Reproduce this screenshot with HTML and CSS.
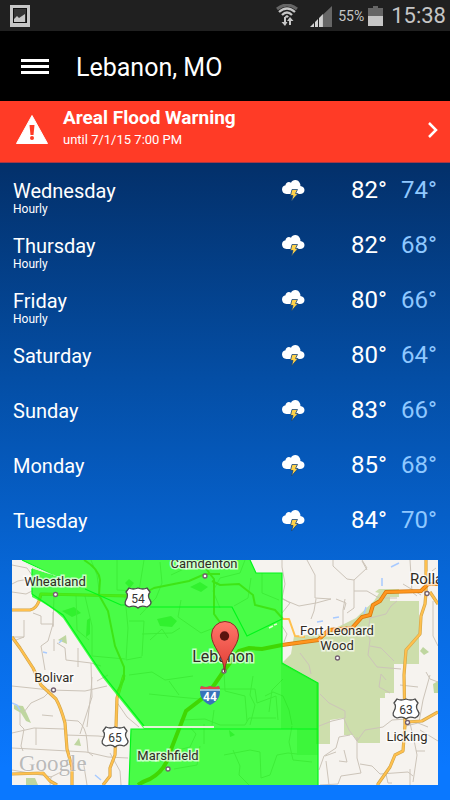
FILE: index.html
```html
<!DOCTYPE html>
<html lang="en">
<head>
<meta charset="utf-8">
<meta name="viewport" content="width=device-width, initial-scale=1">
<title>Lebanon, MO</title>
<link rel="stylesheet" href="styles.css">
</head>
<body>
<div class="status">
  <svg class="status-picture" width="20" height="22" viewBox="0 0 20 22" aria-hidden="true">
    <rect width="20" height="22" fill="#c6c6c6"/><rect x="3" y="3" width="14" height="15" fill="#111"/><rect x="4" y="4" width="12" height="13" fill="#353535"/>
    <path d="M4 17v-3l3-3 2 2 6-4v8z" fill="#c6c6c6"/>
  </svg>
  <svg width="22" height="23" viewBox="0 0 22 23" aria-hidden="true" fill="none">
    <path d="M1 5Q11-3 21 5" stroke="#666" stroke-width="3"/>
    <path d="M3 8Q11 1 19 8M6 11Q11 6 16 11" stroke="#c6c6c6" stroke-width="2.3"/>
    <path d="M8.700 12.500 11 11l2 1.500-2 1.500z" fill="#c6c6c6"/>
    <path d="M9 13v6M14 21v-6" stroke="#c6c6c6" stroke-width="2"/>
    <path d="M5.500 18h6L9 22zM11 17h6.500L14 13z" fill="#c6c6c6"/>
  </svg>
  <svg class="signal" width="22" height="21" viewBox="0 0 22 21" aria-hidden="true">
    <path d="M12 9.500 22 0v21H12z" fill="#666"/>
    <path d="M0 21l4-4v4zM5 16l3-3v8H5zM9 12l3-3v12H9z" fill="#d2d2d2"/>
    <path d="M12 21V9l1-1v13z" fill="#c6c6c6"/>
  </svg>
  <span class="percent">55%</span>
  <svg class="battery" width="15" height="20" viewBox="0 0 15 20" aria-hidden="true">
    <path d="M5 0h5v2h5v8H0V2h5z" fill="#666"/><path d="M0 10h15v10H0z" fill="#c6c6c6"/>
  </svg>
  <time class="clock">15:38</time>
</div>

<header class="bar">
  <button class="menu" type="button" aria-label="Menu"><span></span><span></span><span></span></button>
  <h1>Lebanon, MO</h1>
</header>

<a class="alert" href="#warning">
  <svg width="32" height="29" viewBox="0 0 32 29" aria-hidden="true">
    <path d="M16 .5 31.500 28.500H.5z" fill="#fff" stroke="#fff" stroke-linejoin="round"/>
    <path d="M13.500 10h5l-1 10h-3z" fill="#ff3b26"/><circle cx="16" cy="23" r="2" fill="#ff3b26"/>
  </svg>
  <span class="alert-text"><strong>Areal Flood Warning</strong><span>until 7/1/15 7:00 PM</span></span>
  <svg class="chevron" width="10" height="16" viewBox="0 0 10 16" aria-hidden="true"><path d="M1 1l7 7-7 7" fill="none" stroke="#fff" stroke-width="2.500"/></svg>
</a>

<svg class="symbols" aria-hidden="true">
  <symbol id="storm" viewBox="0 0 24 22">
    <path d="M5.500 15A4.800 4.800 0 0 1 1 10.500C1 8 2.500 6.500 4.500 6.200 4.500 3.500 8 2 10 3.800 11.500 0 17.500 0 19 4.500c.5 1 .5 2 .3 2.500 2.500.2 4.200 2 4.200 4 0 2.500-2 4-4.500 4z" fill="#fff"/>
    <path d="M11 10.500h5.500l-2 4H17L10.500 22l1.500-5.500H9.500z" fill="#ffd24a" stroke="#17447b" stroke-width=".8"/>
  </symbol>
</svg>

<main>
  <ul class="days">
    <li><a href="#wednesday"><span class="day">Wednesday<small>Hourly</small></span><svg class="icon"><use href="#storm"/></svg><span class="high">82°</span><span class="low">74°</span></a></li>
    <li><a href="#thursday"><span class="day">Thursday<small>Hourly</small></span><svg class="icon"><use href="#storm"/></svg><span class="high">82°</span><span class="low">68°</span></a></li>
    <li><a href="#friday"><span class="day">Friday<small>Hourly</small></span><svg class="icon"><use href="#storm"/></svg><span class="high">80°</span><span class="low">66°</span></a></li>
    <li><a href="#saturday"><span class="day">Saturday</span><svg class="icon"><use href="#storm"/></svg><span class="high">80°</span><span class="low">64°</span></a></li>
    <li><a href="#sunday"><span class="day">Sunday</span><svg class="icon"><use href="#storm"/></svg><span class="high">83°</span><span class="low">66°</span></a></li>
    <li><a href="#monday"><span class="day">Monday</span><svg class="icon"><use href="#storm"/></svg><span class="high">85°</span><span class="low">68°</span></a></li>
    <li><a href="#tuesday"><span class="day">Tuesday</span><svg class="icon"><use href="#storm"/></svg><span class="high">84°</span><span class="low">70°</span></a></li>
  </ul>

  <svg class="map" viewBox="12 560 426 225" role="img" aria-label="Map of the warning area around Lebanon">
    <rect x="12" y="560" width="426" height="225" fill="#f6f3ef"/>
    <!-- forest and parks -->
    <path d="M375 592l4-3h20v8h-9v4h29v63h-25v29h-9v5h-5v45h-22l-5-8h-9v-17l-14 2v24h-14v-61l-35-19 10-10 3-18 26-2 22-9 14-7 18-17 5-8z" fill="#cddeac"/>
    <path d="M58 640l8-5 1 9zM74 745l5-7 2 8zM26 778h9l3 7H26zM14 705l9 1 4 8 4 9-5-2-5-8-7-4zM420 651l3-4 6 5-5 3zM433 684l5-3v12h-4z" fill="#bfd6a0"/>
    <path d="M62 611l12-4 7 6-9 4zM87 620l3-2v16l-4 3zM157 619l14-3 6 5-5 6-12-1zM190 587l10-5 8 5-7 5zM229 730l6 5-5 2zM125 583l4-4 5 4-4 5z" fill="#a6cf9a"/>
    <path d="M391 567l8-4M382 578v8M317 622l6-1M333 618l6-1M366 607l-2 7M12 703l5 2 3 5M95 775l6 5M43 652l4 1M59 643l3-3" fill="none" stroke="#a8caff" stroke-width="1.500"/>
    <!-- minor roads -->
    <g fill="none" stroke="#ccc4b9" stroke-linejoin="round">
      <path d="M12 565l15 3 7 10M12 584q12-8 22 0M12 592l14 2 6-3M24 620v17H12M24 637l-8 3M33 613l8 3v8h12l-5 17M53 612v15M48 641l-7 5 4 24M57 643l8 5 1 12 25 3 10 3M78 648v19M54 651v-12M91 663l1 34-12 37M12 686l38 4 35 1 22-5M92 677l-1 15-4 35M64 720l14 1q8 6 9 20l1 11 5 4M12 733l22-5 30 1M65 735l33 1 10 1M36 728v17M20 712v13l4 4-3 17 2 5M12 748l38 2 36 2 22 5 20 1M42 715l11 1M24 712l7-9 13-6 7-7M116 701l11 16 12 10M97 681l11-6M83 760l4 25M50 785l1-8 10-5M110 753l10 18 1 14M60 767l14-4M12 770l40 7"/>
      <path d="M91 560l6 15 3 22M117 560v30l22 1 5-31M54 595l-1 31M76 594l1 36 12 10M85 596l7 30v30l33 3M125 597l3 31-2 32 16-3M129 621h15l-2 35M142 634l30-1 8-5M160 562l2 21-6 15-16 17M181 600l-3 17 23 16 18-7M186 568l-15 7M245 560l-5 13-20 5-7 13 7 17M251 578l-3 20-14 8M262 573v20l17 7M150 640l12-11 6 9M129 675l23-3 13 8 28-4M149 694l29 3 22 2M224 671l1 20 20 5 2 25M215 689h40l2 14 19-7 2 24M253 676l-3 19 5 10-5 20M283 679l-11 11-3 22M214 710l-2 15M180 720l25-1 15 6h25l4-7h27M169 681l10 14M189 726l7 8-6 13-20 5M174 769l23-4 3-19M204 724v20M233 750l7 16-1 9 10 10M224 755l26-5 10 2 1 26 9-3 7-20 11-2 9 1M265 696l8-4 10 4 6 14 3 15M292 726l-3 16 4 18 19 2"/>
      <path d="M282 560v7l3 17-3 14 8 5-8 10M307 560l8 15v23l16 1-15 4-17 3-17-7M316 599l-2 12-3 8M282 626l5 8-3 8M333 560v6l14 13 7 1 13-12-5-8M354 580v28l-7 5M345 599l-2 11v15M336 599l10 4-2 7M354 591h13l12 7h18M362 561l5 9M410 560l2 32 5 4M397 601l-6 5-5 8-16 4-2 14 2 8-2 15 9 12 24 2M300 653l9 12 2 9M370 646l11 2 13 13M432 571l4-3M421 595l-18-11M433 601v35l5 10M400 685l18 2M438 682l-8-3-4-7M386 680l-5-6-2 13 11 6M320 694l9 9 16 8v7l-13 3-13 5M344 719l5 11 8 11 8-11 18-3 9-7 15-1M350 735l-11 2-3 11-12 8-5 14M336 752l-11 4M344 750l3 12-8-1M357 737v21l4 15-20 3-3 8-18 1M329 785l-3-24M360 764l12 2 8 8 28-2 5 4M410 723l5 22 2 10-4 27M420 730l18 11M428 727l-10-4-12 3M425 751h-9M430 675l-7 25-4 22M386 774l2 9h4M410 769v16"/>
    </g>
    <!-- highways -->
    <g fill="none" stroke="#cfa448" stroke-width="3.200" stroke-linejoin="round">
      <path id="hw1" d="M12 610h18q6-1 9-9l2-7 88 2M12 637l8 11 13 20 8 17 15 14q5 9 9 24l2 26 5 18v25M12 774l31-1 7 8 7 4M124 675l-7 23-2 57-5 13v8l-7 9M426 560v32l-1 12-4 12-1 18-14 16-2 25 1 50-2 26-8 4-5 12-12 17v9M430 592l8 12M407 722l15-1 16-9"/>
    </g>
    <use class="road-fill" href="#hw1"/>
    <g fill="none" stroke="#ffc04e" stroke-width="2" stroke-linejoin="round">
      <path d="M12 610h18q6-1 9-9l2-7 88 2M12 637l8 11 13 20 8 17 15 14q5 9 9 24l2 26 5 18v25M12 774l31-1 7 8 7 4M124 675l-7 23-2 57-5 13v8l-7 9M282 619h7l6 17 10 1M426 560v32l-1 12-4 12-1 18-14 16-2 25 1 50-2 26-8 4-5 12-12 17v9M430 592l8 12M407 722l15-1 16-9"/>
    </g>
    <path d="M84 560q15 9 16 20l-1 15 9 16 7 35 9 21v12l-7 13M129 596q17-3 25-8l35-7 16-7h15M200 560l10 14 4 5v35l10 14M212 581l8 4 19-1 14 11 2 10 20 5 8 9" fill="none" stroke="#cfa948" stroke-width="2"/>
    <path d="M138 785q6-4 12-6 16-9 20-27l16-41 22-17 15-22 16-21 10-3 13 1 20-4 36-5 11-10 23-2 10-11 8-2 3-10 7-4 6-9 35-1 7-7h10" fill="none" stroke="#d7780b" stroke-width="4"/>
    <path d="M282 645l36-5 11-10 23-2 10-11 8-2 3-10 7-4 6-9 35-1 7-7h10" fill="none" stroke="#ff961f" stroke-width="2.500"/>
    <!-- warning area -->
    <path d="M22 560h228l6 13h26v90l36 20v102H129l2-55 1-1h12l-41-51-40-60q-12-12-31-21v-29l24 8z" fill="#00ff00" fill-opacity=".7"/>
    <path d="M281 663l37 20v72h-21v-26h-16z" fill="#00d800" fill-opacity=".16"/>
    <path d="M250 560l6 13h26v90l36 20v102M318 729H131l-2 56M144 726l-41-51-40-60-31-21v-25M22 560l31 15M85 589l36 16h13M150 607h82l15 29 35-17" fill="none" stroke="#00f61b" stroke-width="1.200"/>
    <path d="M24 562l32 14-22-7zM143 726h71v2h-70z" fill="#e1f5d6"/>
    <path d="M269 628l4-2M274 625l3-1" stroke="#dfffcf" stroke-width="1.500"/>
    <!-- places -->
    <g fill="#fff" stroke="#735f70" stroke-width="1.300"><circle cx="55.500" cy="594.500" r="2"/><circle cx="205" cy="576" r="2"/><circle cx="224" cy="671" r="2"/><circle cx="337.500" cy="658" r="2"/><circle cx="427" cy="593.500" r="2"/><circle cx="53.500" cy="690" r="2"/><circle cx="168" cy="769" r="2"/><circle cx="407.500" cy="722.500" r="2"/></g>
    <g class="labels">
      <text x="55" y="586">Wheatland</text>
      <text x="204" y="568">Camdenton</text>
      <text class="city" x="223" y="662">Lebanon</text>
      <text class="rolla" x="410" y="584">Rolla</text>
      <text x="337" y="635">Fort Leonard</text>
      <text x="337" y="650">Wood</text>
      <text x="54" y="682">Bolivar</text>
      <text x="168" y="760">Marshfield</text>
      <text x="407" y="741">Licking</text>
    </g>
    <!-- route shields -->
    <g fill="#fff" stroke="#4b4b4b" stroke-width="1.300" stroke-linejoin="round">
      <path id="us" d="M129 588q4 2 9 0 5 2 9 0l3 4q-3 4 0 8t-3 7q-6-2-9 1-3-3-9-1-6-2-3-7t0-8z"/>
      <use href="#us" x="-23" y="139"/><use href="#us" x="268" y="111"/>
    </g>
    <path d="M201 686q5 2 9 0 4 2 9 0 4 13-9 19-13-6-9-19z" fill="#3973ba"/>
    <path d="M201 686q5 2 9 0 4 2 9 0l1 3h-20z" fill="#df4949"/><path d="M200 690h20" stroke="#fff"/>
    <g class="routes"><text x="138" y="603">54</text><text x="115" y="742">65</text><text x="406" y="714">63</text><text class="interstate" x="210" y="701">44</text></g>
    <!-- pin -->
    <defs><linearGradient id="red" x2="0" y2="1"><stop stop-color="#ff776a"/><stop offset="1" stop-color="#e13c34"/></linearGradient></defs>
    <path d="M224.500 672c-1-18-13-25-13-37a13.500 13.500 0 0 1 27 0c0 12-13 19-14 37z" fill="url(#red)" stroke="#8a2925"/>
    <circle cx="224.500" cy="636" r="4.700" fill="#5b140f"/>
    <text class="google" x="19" y="771">Google</text>
  </svg>
</main>
</body>
</html>
```
FILE: styles.css
```css
* { box-sizing: border-box; }

body {
  margin: 0;
  min-height: 100vh;
  display: flex;
  flex-direction: column;
  background: #0a78ff;
  color: #fff;
  font-family: Roboto, "Liberation Sans", sans-serif;
}

a { color: inherit; text-decoration: none; }

.status {
  display: flex;
  align-items: center;
  height: 31px;
  padding: 0 4px 0 10px;
  background: #202020;
  color: #c6c6c6;
}
.status-picture { margin-right: auto; }
.signal { margin: 2px 6px 0 12px; }
.percent { font-size: 14px; }
.battery { margin: 0 8px 0 4px; }
.clock { font-size: 22px; }

.bar {
  display: flex;
  align-items: center;
  gap: 27px;
  height: 70px;
  padding: 2px 21px 0;
  background: #000;
}
.bar h1 { margin: 0; font-size: 25px; font-weight: 400; }
.menu {
  display: flex;
  flex-direction: column;
  gap: 3px;
  width: 28px;
  padding: 0 0 2px;
  border: 0;
  background: none;
}
.menu span { height: 3px; background: #fff; }

.alert {
  display: flex;
  align-items: center;
  gap: 15px;
  height: 62px;
  padding: 0 12px 4px 16px;
  background: #ff3b26;
  border-bottom: 1px solid #a43847;
}
.alert-text {
  flex: 1;
  display: flex;
  flex-direction: column;
  padding-bottom: 2px;
  font-size: 13px;
  line-height: 22px;
}
.alert-text strong { font-size: 19px; }

.symbols { position: absolute; width: 0; height: 0; }

main {
  flex: 1;
  padding: 0 12px 15px;
  background: linear-gradient(#03306a, #044fa7 35%, #0767d8 65%, #0a78ff 95%);
}
.days { margin: 0; padding: 0 1px 12px; list-style: none; }
.days a {
  display: grid;
  grid-template-columns: 1fr 24px 82px 50px;
  align-items: center;
  height: 55px;
}
.day { display: grid; grid-template-rows: 55px; align-items: center; font-size: 20px; height: 55px; }
.day small { margin-top: -18px; font-size: 12px; line-height: 16px; }
.icon { width: 24px; height: 22px; margin-bottom: 2px; }
.high, .low { padding-bottom: 2px; font-size: 24px; text-align: right; }
.low { color: #8fc8ff; }

.map { display: block; width: 100%; height: auto; }
.road-fill { fill: none; }
.labels {
  font-size: 13px;
  text-anchor: middle;
  fill: #302b24;
  stroke: rgba(255, 255, 255, .7);
  stroke-width: 3px;
  paint-order: stroke;
}
.labels .city { font-size: 16px; }
.labels .rolla { font-size: 15px; text-anchor: start; }
.routes { font-size: 12px; text-anchor: middle; fill: #333; }
.routes .interstate { font-weight: 700; fill: #fff; }
.google { font-family: "Liberation Serif", serif; font-size: 23px; fill: #aaa; fill-opacity: .8; stroke: #fff; stroke-opacity: .5; paint-order: stroke; }
```
